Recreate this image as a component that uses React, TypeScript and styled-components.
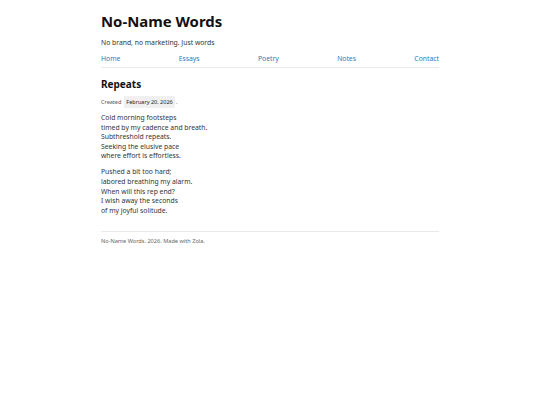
import React from "react";
import styled, { createGlobalStyle } from "styled-components";

const Global = createGlobalStyle`
  html, body { margin: 0; padding: 0; background: #fff; }
  body { font-family: "Noto Sans", "Open Sans", sans-serif; color: #222; }
`;

const Page = styled.div`
  width: 338px;
  margin: 0 auto;
  padding-top: 10px;
`;

const Header = styled.header`
  border-bottom: 1px solid #eaeaea;
  padding-bottom: 3px;
`;

const Title = styled.h1`
  font-size: 14.9px;
  font-weight: 700;
  margin: 0;
  line-height: 22px;
  color: #111;
`;

const Tagline = styled.p`
  font-size: 6.8px;
  margin: 6px 0 6px;
  line-height: 10px;
  color: #333;
`;

const Nav = styled.nav`
  display: flex;
  justify-content: space-between;
`;

const NavLink = styled.a`
  font-size: 6.8px;
  line-height: 10px;
  color: #2b7bbd;
  text-decoration: none;
`;

const Article = styled.article`
  padding-top: 8px;
`;

const PostTitle = styled.h2`
  font-size: 10px;
  font-weight: 700;
  margin: 0;
  line-height: 16px;
  color: #111;
`;

const Meta = styled.div`
  font-size: 5.5px;
  color: #555;
  margin: 4px 0 5px;
  line-height: 10px;
  display: flex;
  align-items: center;
`;

const DateTag = styled.span`
  background: #f0f0f0;
  color: #222;
  padding: 1px 2px;
  margin-left: 3px;
  border-radius: 1px;
`;

const Stanza = styled.p`
  font-size: 6.8px;
  line-height: 9.6px;
  margin: 0 0 6.5px;
  color: #333;
`;

const Footer = styled.footer`
  border-top: 1px solid #eaeaea;
  margin-top: 16px;
  padding-top: 4px;
  font-size: 5.6px;
  line-height: 10px;
  color: #666;
`;

export default function App() {
  return (
    <>
      <Global />
      <Page>
        <Header>
          <Title>No-Name Words</Title>
          <Tagline>No brand, no marketing. Just words</Tagline>
          <Nav>
            <NavLink href="#">Home</NavLink>
            <NavLink href="#">Essays</NavLink>
            <NavLink href="#">Poetry</NavLink>
            <NavLink href="#">Notes</NavLink>
            <NavLink href="#">Contact</NavLink>
          </Nav>
        </Header>
        <Article>
          <PostTitle>Repeats</PostTitle>
          <Meta>
            Created <DateTag>February 20, 2026</DateTag>&nbsp;.
          </Meta>
          <Stanza>
            Cold morning footsteps<br />
            timed by my cadence and breath.<br />
            Subthreshold repeats.<br />
            Seeking the elusive pace<br />
            where effort is effortless.
          </Stanza>
          <Stanza>
            Pushed a bit too hard;<br />
            labored breathing my alarm.<br />
            When will this rep end?<br />
            I wish away the seconds<br />
            of my joyful solitude.
          </Stanza>
        </Article>
        <Footer>No-Name Words. 2026. Made with Zola.</Footer>
      </Page>
    </>
  );
}
